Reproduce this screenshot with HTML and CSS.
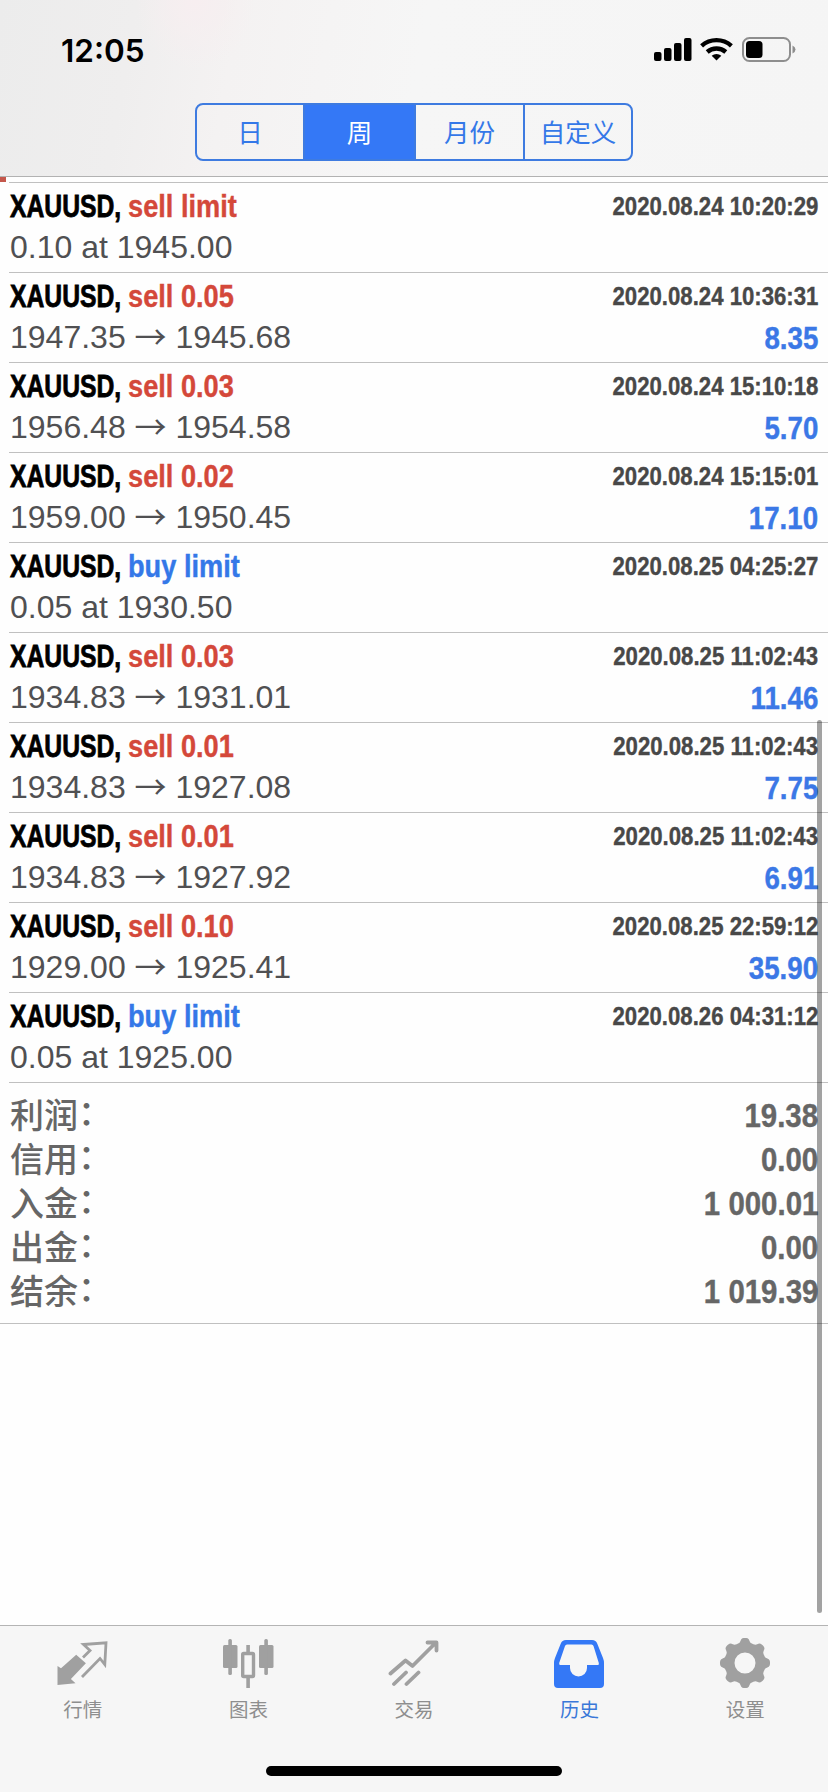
FILE: index.html
```
<!DOCTYPE html>
<html lang="zh-CN">
<head>
<meta charset="utf-8">
<title>历史</title>
<link rel="stylesheet" href="styles.css">
</head>
<body>
<div class="screen">
  <header class="header">
    <div class="status">
      <span class="clock">12:05</span>
      <svg class="status-icons" width="144" height="28" viewBox="0 0 144 28">
        <g fill="#000">
          <rect x="1" y="16" width="7.5" height="9" rx="2"/>
          <rect x="11" y="12" width="7.5" height="13" rx="2"/>
          <rect x="21" y="7" width="7.5" height="18" rx="2"/>
          <rect x="31" y="2" width="7.5" height="23" rx="2"/>
          <path d="M63.5 24.500l-4.800-4.700a7 7 0 0 1 9.600 0z"/>
        </g>
        <g fill="none" stroke="#000" stroke-width="4.400">
          <path d="M54.200 16a14 14 0 0 1 18.600 0"/>
          <path d="M48.600 9.800a22.500 22.500 0 0 1 29.800 0"/>
        </g>
        <rect x="90" y="2" width="47" height="23" rx="6.500" fill="none" stroke="#8e8e8e" stroke-width="2"/>
        <rect x="93" y="5" width="16.500" height="17" rx="3.500" fill="#000"/>
        <path d="M139.500 9.500q3 1.500 3 4t-3 4z" fill="#8e8e8e"/>
      </svg>
    </div>
    <nav class="segments">
      <span class="segment">日</span>
      <span class="segment segment-on">周</span>
      <span class="segment">月份</span>
      <span class="segment">自定义</span>
    </nav>
  </header>
  <main class="history">
    <div class="peek"></div>
    <section class="deals" id="deals"></section>
    <section class="summary">
      <div class="total"><span class="label">利润<span class="colon">：</span></span><span class="amount">19.38</span></div>
      <div class="total"><span class="label">信用<span class="colon">：</span></span><span class="amount">0.00</span></div>
      <div class="total"><span class="label">入金<span class="colon">：</span></span><span class="amount">1 000.01</span></div>
      <div class="total"><span class="label">出金<span class="colon">：</span></span><span class="amount">0.00</span></div>
      <div class="total"><span class="label">结余<span class="colon">：</span></span><span class="amount">1 019.39</span></div>
    </section>
    <div class="scrollbar"></div>
  </main>
  <footer class="tabbar">
    <div class="tabs">
      <div class="tab">
        <svg width="52" height="52" viewBox="0 0 52 52"><path fill="#a0a0a0" d="M.5 29l3.500 2.300 15.200-13.600 9.700 8.600-15 15.700 4.600 4.300L.5 48z"/><path fill="none" stroke="#a0a0a0" stroke-width="2.800" d="M26 20.500l7-7-6.500-6L49 5.800l-1.200 21.700-4.800-6L25 40"/></svg>
        <span>行情</span>
      </div>
      <div class="tab">
        <svg width="52" height="52" viewBox="0 0 52 52"><g fill="#a0a0a0"><rect x="1" y="8" width="14.500" height="23" rx="1.500"/><rect x="6.300" y="2" width="3.600" height="36" rx="1.500"/><rect x="37" y="8" width="14.500" height="23" rx="1.500"/><rect x="42.300" y="2" width="3.600" height="36" rx="1.500"/><rect x="24.300" y="8" width="3.600" height="8"/><rect x="24.300" y="39" width="3.600" height="12"/></g><rect x="20.700" y="16.500" width="10.800" height="23" rx="1" fill="none" stroke="#a0a0a0" stroke-width="3.400"/></svg>
        <span>图表</span>
      </div>
      <div class="tab">
        <svg width="52" height="52" viewBox="0 0 52 52"><path fill="none" stroke="#a0a0a0" stroke-width="3.800" stroke-linecap="round" stroke-linejoin="round" d="M2.500 36.500L17.500 23.500l7 5.500L47 6.500M39.500 5.500h9v8M6 47l12-11.500M18.500 47l12-11.500"/></svg>
        <span>交易</span>
      </div>
      <div class="tab tab-on">
        <svg width="52" height="52" viewBox="0 0 52 52"><path fill="#3478f6" fill-rule="evenodd" d="M12 3h26q4 0 5.200 3.500L49 21q1 2.500 1 5v21q0 4-4 4H4q-4 0-4-4V26q0-2.500 1-5L6.800 6.500Q8 3 12 3zM13 7.500Q11.500 7.500 11 9L5.200 26q-.4 2 1 2H16v3a8.500 8.500 0 0 0 17 0v-3h11q1.200 0 .8-2L39.500 9q-.5-1.500-2-1.500z"/></svg>
        <span>历史</span>
      </div>
      <div class="tab">
        <svg width="52" height="52" viewBox="0 0 52 52"><path id="gear" fill="#a0a0a0" fill-rule="evenodd" d=""/></svg>
        <span>设置</span>
      </div>
    </div>
    <div class="home"></div>
  </footer>
</div>
<script src="script.js"></script>
</body>
</html>
```
FILE: styles.css
```
* { box-sizing: border-box; }
body {
  margin: 0;
  font-family: "Liberation Sans", "Noto Sans CJK SC", sans-serif;
  background: #fefefe;
}
.screen {
  width: 828px;
  height: 1792px;
  display: flex;
  flex-direction: column;
  overflow: hidden;
}
.header {
  height: 177px;
  flex: none;
  border-bottom: 1px solid #b2b2b2;
  background:
    radial-gradient(ellipse 60px 70px at 195px 0, #f7eef0, rgba(247, 238, 240, 0)),
    linear-gradient(100deg, #ececec 0, #efeeee 16%, #f4f2f2 28%, #f6f6f6 50%, #f5f5f5 100%);
}
.status {
  height: 103px;
  padding: 33px 31px 0 61px;
  display: flex;
  justify-content: space-between;
  align-items: flex-start;
}
.clock {
  font: 600 31.500px/36px Inter, sans-serif;
  color: #000;
}
.status-icons { margin-top: 3px; }
.segments {
  width: 438px;
  height: 58px;
  margin-left: 195px;
  display: grid;
  grid-template-columns: 106px 111px 109px 108px;
  border: 2px solid #3e7be0;
  border-radius: 8px;
  overflow: hidden;
}
.segment {
  display: flex;
  align-items: center;
  justify-content: center;
  padding-bottom: 3px;
  font: 25.500px/36px "Noto Sans CJK SC", sans-serif;
  color: #3478e8;
}
.segment + .segment { border-left: 2px solid #3e7be0; }
.segment-on { background: #3478f6; color: #fff; }
.history {
  flex: 1;
  position: relative;
}
.peek {
  height: 5px;
  border-left: 6px solid #c4574b;
}
.deal {
  height: 90px;
  margin-left: 9px;
  padding: 3px 10px 0 1px;
  border-top: 1px solid #c0c0c0;
}
.deal:last-child {
  height: 91px;
  border-bottom: 1px solid #c0c0c0;
}
.line {
  display: flex;
  justify-content: space-between;
  height: 41px;
  line-height: 41px;
  white-space: pre;
}
.symbol, .side, .time, .profit, .amount {
  display: inline-block;
  font-family: "Liberation Sans", sans-serif;
  font-weight: bold;
  -webkit-text-stroke: .4px currentColor;
}
/* Condensed bold lettering */
.symbol { width: 118px; transform: scaleX(.772); transform-origin: left; -webkit-text-stroke-width: .8px; }
.side { transform: scaleX(.85); transform-origin: left; }
.time { transform: scaleX(.853); transform-origin: right; }
.profit, .amount { transform: scaleX(.865); transform-origin: right; }
.title { font-size: 32px; color: #000; }
.sell { color: #d4483a; }
.buy { color: #3478e8; }
.time { font-size: 26px; color: #484848; }
.prices { font-size: 32px; color: #505052; }
.arrow {
  display: inline-block;
  font: 400 32px/1 "Noto Sans CJK SC", sans-serif;
  transform: translateY(1px);
}
.profit { font-size: 32px; line-height: 43px; color: #3b78e6; }
.summary {
  height: 241px;
  padding: 10px 10px 0 10px;
  border-bottom: 1px solid #c0c0c0;
}
.total {
  display: flex;
  justify-content: space-between;
  height: 44px;
  font: 500 34px/44px "Noto Sans CJK SC", sans-serif;
  color: #666;
}
.label { line-height: 42px; }
.colon { display: inline-block; transform: translateY(-3px); }
.scrollbar {
  position: absolute;
  right: 6px;
  top: 543px;
  width: 5px;
  height: 893px;
  border-radius: 3px;
  background: rgba(0, 0, 0, .36);
}
.tabbar {
  flex: none;
  height: 167px;
  border-top: 1px solid #b4b4b4;
  background: #f6f6f6;
}
.tabs {
  height: 140px;
  display: grid;
  grid-template-columns: repeat(5, 1fr);
}
.tab {
  display: flex;
  flex-direction: column;
  align-items: center;
  padding-top: 11px;
  font: 19.500px/28px "Noto Sans CJK SC", sans-serif;
  color: #8e8e8e;
  gap: 6px;
}
.tab-on { color: #3a78d8; }
.home {
  width: 296px;
  height: 10px;
  margin: 0 auto;
  border-radius: 5px;
  background: #000;
}
```
FILE: script.js
```
const deals = [
  ["sell", "limit", "0.10 at 1945.00", "2020.08.24 10:20:29", ""],
  ["sell", "0.05", "1947.35 → 1945.68", "2020.08.24 10:36:31", "8.35"],
  ["sell", "0.03", "1956.48 → 1954.58", "2020.08.24 15:10:18", "5.70"],
  ["sell", "0.02", "1959.00 → 1950.45", "2020.08.24 15:15:01", "17.10"],
  ["buy", "limit", "0.05 at 1930.50", "2020.08.25 04:25:27", ""],
  ["sell", "0.03", "1934.83 → 1931.01", "2020.08.25 11:02:43", "11.46"],
  ["sell", "0.01", "1934.83 → 1927.08", "2020.08.25 11:02:43", "7.75"],
  ["sell", "0.01", "1934.83 → 1927.92", "2020.08.25 11:02:43", "6.91"],
  ["sell", "0.10", "1929.00 → 1925.41", "2020.08.25 22:59:12", "35.90"],
  ["buy", "limit", "0.05 at 1925.00", "2020.08.26 04:31:12", ""]
];
document.getElementById("deals").innerHTML = deals.map(([side, size, prices, time, profit]) => `
  <article class="deal">
    <div class="line"><span class="title"><span class="symbol">XAUUSD,</span><span class="side ${side}">${side} ${size}</span></span><span class="time">${time}</span></div>
    <div class="line"><span class="prices">${prices.replace("→", '<span class="arrow">→</span>')}</span><span class="profit">${profit}</span></div>
  </article>`).join("");

// Eight-lobed gear outline around a round hole.
let outline = "";
for (let i = 0; i < 120; i++) {
  const a = i / 120 * Math.PI * 2;
  const r = 22.800 + 2.300 * Math.tanh(2 * Math.cos(8 * a));
  outline += (i ? "L" : "M") + (26 + r * Math.cos(a)).toFixed(2) + " " + (26 + r * Math.sin(a)).toFixed(2);
}
document.getElementById("gear").setAttribute("d", outline + "ZM15.500 26a10.500 10.500 0 1 0 21 0a10.500 10.500 0 1 0-21 0z");
```
